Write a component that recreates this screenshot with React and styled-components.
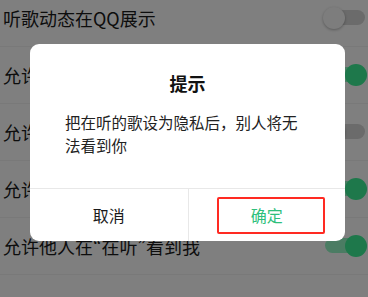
import React from "react";
import styled, { createGlobalStyle } from "styled-components";

const GlobalStyle = createGlobalStyle`
  html, body {
    margin: 0;
    padding: 0;
    background: #ffffff;
    overflow: hidden;
  }
  body {
    font-family: "Noto Sans CJK SC", "Noto Sans", sans-serif;
  }
`;

const settings = [
  { id: 1, label: "听歌动态在QQ展示", on: false },
  { id: 2, label: "允许好友查看我的歌单", on: true },
  { id: 3, label: "允许陌生人查看我的主页", on: false },
  { id: 4, label: "允许好友看到我的收藏", on: true },
  { id: 5, label: "允许他人在“在听”看到我", on: true },
];

const Page = styled.div`
  width: 368px;
  height: 297px;
  overflow: hidden;
  position: relative;
  background: #ffffff;
`;

const List = styled.ul`
  list-style: none;
  margin: -10.5px 0 0;
  padding: 0;
`;

const Row = styled.li`
  height: 57px;
  box-sizing: border-box;
  display: flex;
  align-items: center;
  justify-content: space-between;
  padding: 0 1px 0 3px;
  border-bottom: 1px solid rgba(0, 0, 0, 0.05);
`;

const Label = styled.span`
  font-size: 18px;
  color: #1a1a1a;
  white-space: nowrap;
  font-feature-settings: "pwid";
`;

const Switch = styled.span`
  position: relative;
  flex: none;
  width: 44px;
  height: 22px;
`;

const Track = styled.span`
  position: absolute;
  left: 2px;
  right: 2px;
  top: 3.5px;
  height: 15px;
  border-radius: 8px;
  background: ${({ $on }) => ($on ? "#96f8c6" : "#d6d6d6")};
`;

const Thumb = styled.span`
  position: absolute;
  top: 0;
  ${({ $on }) => ($on ? "right: 0;" : "left: 0;")}
  width: 22px;
  height: 22px;
  border-radius: 50%;
  background: ${({ $on }) => ($on ? "#3cf096" : "#fafafa")};
  box-shadow: ${({ $on }) => ($on ? "none" : "0 1px 3px rgba(0,0,0,0.3)")};
`;

const Overlay = styled.div`
  position: absolute;
  inset: 0;
  background: rgba(0, 0, 0, 0.5);
  display: flex;
  align-items: flex-start;
  padding: 44px 0 0 30px;
`;

const Dialog = styled.div`
  width: 315px;
  background: #ffffff;
  border-radius: 9px;
  overflow: hidden;
  display: flex;
  flex-direction: column;
`;

const Title = styled.h3`
  margin: 0;
  padding-top: 28px;
  font-size: 18px;
  line-height: 22px;
  font-weight: 700;
  color: #111111;
  text-align: center;
`;

const Message = styled.p`
  margin: 16.5px 0 0;
  padding: 0 34px 31.5px 35px;
  font-size: 15.5px;
  line-height: 23px;
  color: #222222;
`;

const Actions = styled.div`
  display: grid;
  grid-template-columns: 1fr 1fr;
  border-top: 1px solid #e8e8e8;
  height: 52px;
`;

const ActionButton = styled.button`
  position: relative;
  border: none;
  background: none;
  margin: 0;
  padding: 0;
  font-family: inherit;
  font-size: 16px;
  color: ${({ $primary }) => ($primary ? "#2fbf7c" : "#1a1a1a")};
  border-left: ${({ $primary }) => ($primary ? "1px solid #e8e8e8" : "none")};
  cursor: pointer;
`;

const Highlight = styled.span`
  position: absolute;
  left: 28px;
  right: 20px;
  top: 8px;
  bottom: 7px;
  border: 2px solid #ff2a22;
  border-radius: 2px;
  pointer-events: none;
`;

const App = () => {
  return (
    <Page>
      <GlobalStyle />
      <List>
        {settings.map((item) => (
          <Row key={item.id}>
            <Label>{item.label}</Label>
            <Switch>
              <Track $on={item.on} />
              <Thumb $on={item.on} />
            </Switch>
          </Row>
        ))}
      </List>

      <Overlay>
        <Dialog>
          <Title>提示</Title>
          <Message>把在听的歌设为隐私后，别人将无法看到你</Message>
          <Actions>
            <ActionButton>取消</ActionButton>
            <ActionButton $primary>
              确定
              <Highlight />
            </ActionButton>
          </Actions>
        </Dialog>
      </Overlay>
    </Page>
  );
};

export default App;
